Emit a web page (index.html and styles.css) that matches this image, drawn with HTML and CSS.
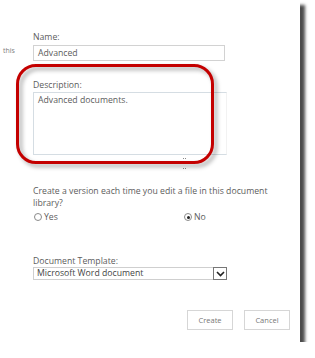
FILE: index.html
```html
<!DOCTYPE html>
<html>
<head>
<meta charset="utf-8">
<link rel="stylesheet" href="styles.css">
</head>
<body>
<div class="sheet">
  <div class="form">
    <div class="aside"></div>
    <div class="label label-name">Name:</div>

    <div class="aside aside-text">this</div>
    <div class="input">Advanced</div>

    <div class="aside"></div>
    <div class="label label-desc">Description:</div>

    <div class="aside"></div>
    <div class="textarea">Advanced documents.</div>

    <div class="aside"></div>
    <div class="grip"><span class="grip-mark"></span><span class="grip-mark"></span></div>

    <div class="aside"></div>
    <div class="question">Create a version each time you edit a file in this document library?</div>

    <div class="aside"></div>
    <div class="radios">
      <div class="radio-opt radio-yes"><span class="radio"></span><span>Yes</span></div>
      <div class="radio-opt radio-no"><span class="radio checked"></span><span>No</span></div>
    </div>

    <div class="aside"></div>
    <div class="label label-tpl">Document Template:</div>

    <div class="aside"></div>
    <div class="select">
      <div class="select-value">Microsoft Word document</div>
      <div class="select-btn">
        <svg width="9" height="6" viewBox="0 0 9 6"><path d="M1 1 L4.5 4.5 L8 1" fill="none" stroke="#222" stroke-width="1.6"/></svg>
      </div>
    </div>

    <div class="aside"></div>
    <div class="buttons">
      <div class="btn">Create</div>
      <div class="btn">Cancel</div>
    </div>
  </div>
  <div class="highlight"></div>
</div>
</body>
</html>
```

FILE: styles.css
```css
html, body {
  margin: 0;
  padding: 0;
  background: #ffffff;
}
body {
  font-family: "Open Sans", "Noto Sans", sans-serif;
  font-size: 8.7px;
  color: #5c5c5c;
}
.sheet {
  position: relative;
  width: 300px;
  height: 342px;
  background: #ffffff;
  box-shadow: 5px 5px 3px rgba(0, 0, 0, 0.7);
  box-sizing: border-box;
  padding-top: 32px;
}
.form {
  display: grid;
  grid-template-columns: 33px 262px;
  align-items: start;
}
.aside-text {
  font-size: 7px;
  color: #808080;
  padding-left: 3px;
  padding-top: 3px;
}
.label {
  line-height: 11px;
}
.input {
  margin-top: 2px;
  width: 192px;
  height: 16px;
  box-sizing: border-box;
  border: 1px solid #d2d2d2;
  padding-left: 4px;
  line-height: 14px;
}
.label-desc {
  margin-top: 19px;
}
.textarea {
  margin-top: 1px;
  width: 194px;
  height: 63px;
  box-sizing: border-box;
  border: 1px solid #d5dde3;
  border-right-color: #f2f2f2;
  padding: 1px 4px;
  line-height: 12px;
}
.grip {
  height: 17px;
  position: relative;
}
.grip-mark {
  position: absolute;
  left: 150px;
  width: 3px;
  height: 2px;
  border-top: 1px dotted #888;
}
.grip-mark:first-child { top: 3px; }
.grip-mark:last-child { top: 13px; }
.question {
  margin-top: 13px;
  width: 245px;
  line-height: 12px;
}
.radios {
  margin-top: 2px;
  display: flex;
  height: 12px;
  align-items: center;
}
.radio-opt {
  display: flex;
  align-items: center;
  gap: 2px;
}
.radio-yes {
  width: 150px;
}
.radio {
  width: 8px;
  height: 8px;
  border: 1px solid #8a8a8a;
  border-radius: 50%;
  box-sizing: border-box;
  display: inline-block;
  position: relative;
  margin-left: 1px;
}
.radio.checked::after {
  content: "";
  position: absolute;
  left: 1.5px;
  top: 1.5px;
  width: 3px;
  height: 3px;
  border-radius: 50%;
  background: #222;
}
.label-tpl {
  margin-top: 33px;
}
.select {
  display: flex;
  width: 194px;
  height: 13px;
}
.select-value {
  flex: 1;
  border: 1px solid #cfcfcf;
  border-right: none;
  padding-left: 3px;
  line-height: 11px;
  color: #444;
}
.select-btn {
  width: 14px;
  box-sizing: border-box;
  border: 1px solid #777;
  display: flex;
  align-items: center;
  justify-content: center;
}
.buttons {
  margin-top: 30px;
  margin-left: 154px;
  display: flex;
  gap: 11px;
}
.btn {
  flex: none;
  width: 46px;
  height: 20px;
  box-sizing: border-box;
  border: 1px solid #d6d6d6;
  display: flex;
  align-items: center;
  justify-content: center;
  color: #777;
  font-size: 7.5px;
}
.highlight {
  position: absolute;
  left: 16px;
  top: 64px;
  width: 198px;
  height: 100px;
  box-sizing: border-box;
  border: 3px solid #c40000;
  border-radius: 20px;
  filter: drop-shadow(3px 3px 2px rgba(0, 0, 0, 0.35));
}
```
